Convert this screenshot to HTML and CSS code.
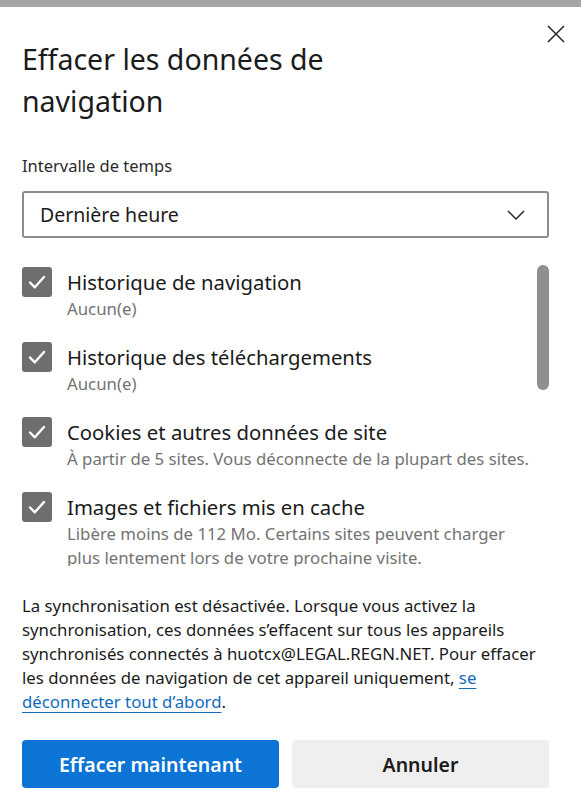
FILE: index.html
```html
<!DOCTYPE html>
<html lang="fr">
<head>
<meta charset="utf-8">
<title>Effacer les données de navigation</title>
<link rel="stylesheet" href="styles.css">
</head>
<body>
<div class="topbar"></div>
<div class="dialog">
  <button class="close" aria-label="Fermer">
    <svg width="18" height="18" viewBox="0 0 18 18"><path d="M1 1 L17 17 M17 1 L1 17" stroke="#2b2b2b" stroke-width="1.6" fill="none"/></svg>
  </button>
  <h1 class="title">Effacer les données de navigation</h1>
  <div class="field-label">Intervalle de temps</div>
  <div class="select">
    <span>Dernière heure</span>
    <svg class="chev" width="18" height="10" viewBox="0 0 18 10"><path d="M1 1 L9 9 L17 1" stroke="#2b2b2b" stroke-width="1.5" fill="none"/></svg>
  </div>
  <div class="list-wrap">
    <div class="list">
      <div class="item">
        <span class="box"><svg width="30" height="30" viewBox="0 0 30 30"><path d="M8 15.5 L12.8 20.3 L22 10" stroke="#fff" stroke-width="2.4" fill="none" stroke-linecap="round" stroke-linejoin="round"/></svg></span>
        <div class="text"><div class="name">Historique de navigation</div><div class="desc">Aucun(e)</div></div>
      </div>
      <div class="item">
        <span class="box"><svg width="30" height="30" viewBox="0 0 30 30"><path d="M8 15.5 L12.8 20.3 L22 10" stroke="#fff" stroke-width="2.4" fill="none" stroke-linecap="round" stroke-linejoin="round"/></svg></span>
        <div class="text"><div class="name">Historique des téléchargements</div><div class="desc">Aucun(e)</div></div>
      </div>
      <div class="item">
        <span class="box"><svg width="30" height="30" viewBox="0 0 30 30"><path d="M8 15.5 L12.8 20.3 L22 10" stroke="#fff" stroke-width="2.4" fill="none" stroke-linecap="round" stroke-linejoin="round"/></svg></span>
        <div class="text"><div class="name">Cookies et autres données de site</div><div class="desc">À partir de 5 sites. Vous déconnecte de la plupart des sites.</div></div>
      </div>
      <div class="item">
        <span class="box"><svg width="30" height="30" viewBox="0 0 30 30"><path d="M8 15.5 L12.8 20.3 L22 10" stroke="#fff" stroke-width="2.4" fill="none" stroke-linecap="round" stroke-linejoin="round"/></svg></span>
        <div class="text"><div class="name">Images et fichiers mis en cache</div><div class="desc narrow">Libère moins de 112 Mo. Certains sites peuvent charger plus lentement lors de votre prochaine visite.</div></div>
      </div>
    </div>
    <div class="scrollbar"><div class="thumb"></div></div>
  </div>
  <p class="sync">La synchronisation est désactivée. Lorsque vous activez la synchronisation, ces données s’effacent sur tous les appareils synchronisés connectés à huotcx@LEGAL.REGN.NET. Pour effacer les données de navigation de cet appareil uniquement, <a href="#">se déconnecter tout d’abord</a>.</p>
  <div class="buttons">
    <button class="btn primary">Effacer maintenant</button>
    <button class="btn secondary">Annuler</button>
  </div>
</div>
</body>
</html>
```

FILE: styles.css
```css
* { box-sizing: border-box; }
html, body { margin: 0; padding: 0; background: #ffffff; }
body {
  font-family: "Noto Sans", "Open Sans", "Liberation Sans", sans-serif;
  color: #1b1b1b;
}
.topbar { height: 7px; background: #a5a5a5; }
.dialog {
  position: relative;
  padding: 31px 32px 0 22px;
}
.close {
  position: absolute;
  top: 18px;
  right: 16px;
  width: 18px;
  height: 18px;
  padding: 0;
  border: 0;
  background: none;
  display: flex;
}
.title {
  margin: 0;
  max-width: 360px;
  font-size: 28.5px;
  line-height: 42px;
  font-weight: 400;
  color: #1b1b1b;
}
.field-label {
  margin-top: 32px;
  font-size: 16.5px;
  line-height: 24px;
  color: #2b2b2b;
}
.select {
  margin-top: 13px;
  height: 47px;
  border: 2px solid #8c8c8c;
  border-radius: 3px;
  padding: 0 22px 0 16px;
  display: flex;
  align-items: center;
  justify-content: space-between;
  font-size: 19.5px;
  color: #1b1b1b;
}
.list-wrap {
  margin-top: 27px;
  height: 301px;
  overflow: hidden;
  display: grid;
  grid-template-columns: 1fr 12px;
}
.list {
  padding-top: 2px;
  display: flex;
  flex-direction: column;
  gap: 21px;
}
.item {
  display: grid;
  grid-template-columns: 30px 1fr;
  column-gap: 15px;
}
.box {
  width: 30px;
  height: 30px;
  border-radius: 3px;
  background: #6e6e6e;
  display: flex;
}
.name {
  font-size: 20.3px;
  line-height: 30px;
  color: #1b1b1b;
}
.desc {
  font-size: 16.8px;
  line-height: 24px;
  color: #737373;
}
.desc.narrow { max-width: 448px; }
.thumb {
  width: 12px;
  height: 125px;
  border-radius: 6px;
  background: #8f8f8f;
}
.sync {
  margin: 28px 0 0;
  font-size: 16.8px;
  line-height: 24px;
  color: #1b1b1b;
}
.sync a {
  color: #0f6cbd;
  text-decoration: underline;
  text-underline-offset: 4px;
  text-decoration-thickness: 1px;
}
.buttons {
  margin-top: 26px;
  display: grid;
  grid-template-columns: 1fr 1fr;
  column-gap: 13px;
}
.btn {
  height: 48px;
  border: 0;
  border-radius: 4px;
  font-family: inherit;
  font-size: 19.5px;
  font-weight: 600;
}
.btn.primary { background: #0b74d4; color: #ffffff; }
.btn.secondary { background: #efefef; color: #1b1b1b; }
```
